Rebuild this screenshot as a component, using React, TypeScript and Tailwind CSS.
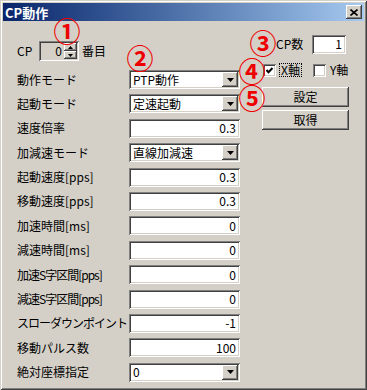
import React from "react"

const sunken =
  "shadow-[inset_1px_1px_#808080,inset_-1px_-1px_#ffffff,inset_2px_2px_#404040,inset_-2px_-2px_#d4d0c8]"
const raised =
  "shadow-[inset_-1px_-1px_#404040,inset_1px_1px_#ffffff,inset_-2px_-2px_#808080,inset_2px_2px_#d4d0c8]"

type Row = { label: string; type: "combo" | "text"; value: string; tight?: boolean }

const rows: Row[] = [
  { label: "動作モード", type: "combo", value: "PTP動作" },
  { label: "起動モード", type: "combo", value: "定速起動" },
  { label: "速度倍率", type: "text", value: "0.3" },
  { label: "加減速モード", type: "combo", value: "直線加減速" },
  { label: "起動速度[pps]", type: "text", value: "0.3" },
  { label: "移動速度[pps]", type: "text", value: "0.3" },
  { label: "加速時間[ms]", type: "text", value: "0" },
  { label: "減速時間[ms]", type: "text", value: "0" },
  { label: "加速S字区間[pps]", type: "text", value: "0", tight: true },
  { label: "減速S字区間[pps]", type: "text", value: "0", tight: true },
  { label: "スローダウンポイント", type: "text", value: "-1", tight: true },
  { label: "移動パルス数", type: "text", value: "100" },
  { label: "絶対座標指定", type: "combo", value: "0" },
]

// red annotation numbers laid over the dialog
const marks = [
  { ch: "①", cls: "left-[54px] top-[17px]" },
  { ch: "②", cls: "left-[127px] top-[44px]" },
  { ch: "③", cls: "left-[250px] top-[29px]" },
  { ch: "④", cls: "left-[239px] top-[57px]" },
  { ch: "⑤", cls: "left-[239px] top-[84px]" },
]

function DownArrow() {
  return (
    <svg width="7" height="4" viewBox="0 0 7 4">
      <path d="M0 0h7L3.5 4z" fill="#000" />
    </svg>
  )
}

function Combo({ value }: { value: string }) {
  return (
    <div className={`flex h-[19px] w-[111px] items-center bg-white p-[2px] ${sunken}`}>
      <span className="flex-1 pl-[2px] leading-none">{value}</span>
      <div className={`flex h-full w-[16px] items-center justify-center bg-[#d4d0c8] ${raised}`}>
        <DownArrow />
      </div>
    </div>
  )
}

function TextBox({ value, w = "w-[111px]" }: { value: string; w?: string }) {
  return (
    <div className={`flex h-[19px] ${w} items-center justify-end bg-white pr-[4px] ${sunken}`}>
      <span className="leading-none">{value}</span>
    </div>
  )
}

function Button({ label }: { label: string }) {
  return (
    <div className={`flex h-[20px] w-[87px] items-center justify-center bg-[#d4d0c8] ${raised}`}>
      <span className="leading-none">{label}</span>
    </div>
  )
}

function CheckBox({ checked }: { checked?: boolean }) {
  return (
    <div className={`flex h-[13px] w-[13px] items-center justify-center bg-white ${sunken}`}>
      {checked && (
        <svg width="9" height="9" viewBox="0 0 9 9">
          <path d="M1.5 4l2 2.2L7.5 2" stroke="#000" strokeWidth="2" fill="none" />
        </svg>
      )}
    </div>
  )
}

export default function App() {
  return (
    <div
      className="relative flex h-[390px] w-[367px] flex-col bg-[#d4d0c8] p-[3px] text-[12px] text-black shadow-[inset_1px_1px_#d4d0c8,inset_-1px_-1px_#404040,inset_2px_2px_#ffffff,inset_-2px_-2px_#808080]"
      style={{ fontFamily: '"Noto Sans CJK JP", "Liberation Sans", sans-serif' }}
    >
      {/* title bar */}
      <div className="flex h-[18px] items-center justify-between bg-linear-to-r from-[#0a246a] to-[#a6caf0] pl-[2px] pr-[2px]">
        <span className="text-[13px] font-bold leading-none text-white">CP動作</span>
        <div className={`flex h-[14px] w-[16px] items-center justify-center bg-[#d4d0c8] ${raised}`}>
          <svg width="8" height="7" viewBox="0 0 8 7">
            <path d="M0.5 0.5l7 6M7.5 0.5l-7 6" stroke="#000" strokeWidth="1.6" />
          </svg>
        </div>
      </div>

      <div className="flex flex-1">
        {/* left column */}
        <div className="flex w-[259px] flex-col pl-[14px] pt-[20px]">
          <div className="flex h-[20px] items-center">
            <span className="w-[22px] leading-none">CP</span>
            <div className={`flex h-[20px] w-[40px] items-center bg-[#d4d0c8] p-[2px] ${sunken}`}>
              <span className="flex-1 pr-[2px] text-right leading-none">0</span>
              <div className="flex h-full w-[13px] flex-col">
                <div className={`flex flex-1 items-center justify-center ${raised}`}>
                  <svg width="5" height="3" viewBox="0 0 5 3">
                    <path d="M2.5 0L5 3H0z" fill="#000" />
                  </svg>
                </div>
                <div className={`flex flex-1 items-center justify-center ${raised}`}>
                  <svg width="5" height="3" viewBox="0 0 5 3">
                    <path d="M0 0h5L2.5 3z" fill="#000" />
                  </svg>
                </div>
              </div>
            </div>
            <span className="ml-[3px] leading-none">番目</span>
          </div>

          <div className="mt-[9px] flex flex-col gap-[5.4px]">
            {rows.map((r) => (
              <div key={r.label} className="flex h-[19px] items-center">
                <span
                  className={`w-[112px] whitespace-nowrap leading-none ${r.tight ? "tracking-[-1px]" : ""}`}
                >
                  {r.label}
                </span>
                {r.type === "combo" ? <Combo value={r.value} /> : <TextBox value={r.value} />}
              </div>
            ))}
          </div>
        </div>

        {/* right column */}
        <div className="flex flex-col pt-[13px]">
          <div className="flex h-[20px] items-center pl-[14px]">
            <span className="w-[36px] leading-none">CP数</span>
            <TextBox value="1" w="w-[34px]" />
          </div>
          <div className="mt-[8px] flex h-[16px] items-center pl-[1px]">
            <CheckBox checked />
            <span className="ml-[3px] border border-dotted border-black px-[1px] leading-none">X軸</span>
            <div className="ml-[11px]">
              <CheckBox />
            </div>
            <span className="ml-[4px] leading-none">Y軸</span>
          </div>
          <div className="mt-[9px]">
            <Button label="設定" />
          </div>
          <div className="mt-[3px]">
            <Button label="取得" />
          </div>
        </div>
      </div>

      {marks.map((m) => (
        <span
          key={m.ch}
          className={`absolute ${m.cls} flex h-[26px] w-[26px] items-center justify-center text-[27px] font-bold leading-none text-[#ee0000]`}
        >
          {m.ch}
        </span>
      ))}
    </div>
  )
}
